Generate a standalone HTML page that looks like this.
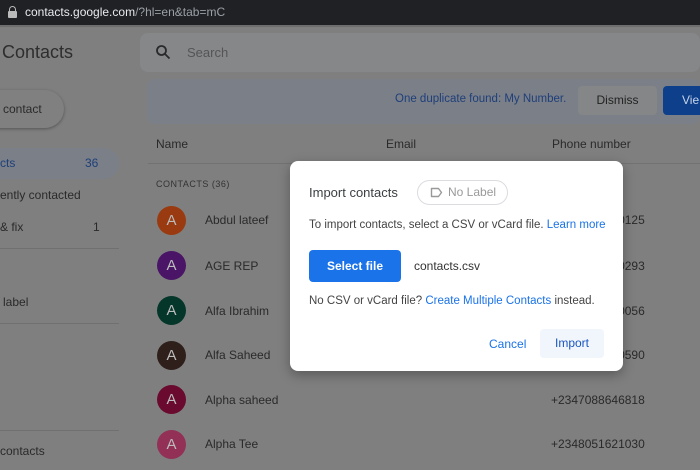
<!DOCTYPE html>
<html><head><style>
*{margin:0;padding:0;box-sizing:border-box}
html,body{width:700px;height:470px;overflow:hidden;background:#7f7f7f}
body{font-family:"Liberation Sans",Arial,sans-serif;position:relative;color:#222}
.a{position:absolute;white-space:nowrap}
.av{position:absolute;left:157px;width:29px;height:29px;border-radius:50%;color:#bbb;font-size:15px;text-align:center;line-height:29px}
.nm{position:absolute;left:205px;font-size:12px;color:#2a2a2a}
.ph{position:absolute;left:551px;font-size:12px;color:#2a2a2a}
.d{font-size:11.5px}
</style></head><body>
<div class="a" style="left:0;top:0;width:700px;height:470px;background:#7f7f7f"></div>
<div class="a" style="left:0;top:0;width:700px;height:25px;background:#202124"></div>
<div class="a" style="left:9px;top:6px;width:7px;height:6px;border:1.5px solid #bbb;border-bottom:none;border-radius:4px 4px 0 0"></div>
<div class="a" style="left:8px;top:11px;width:9px;height:7px;background:#bbb;border-radius:1px"></div>
<div class="a" style="left:25px;top:5px;font-size:12px;color:#e8eaed">contacts.google.com<span style="color:#9aa0a6">/?hl=en&amp;tab=mC</span></div>
<div class="a" style="left:0;top:25px;width:700px;height:2px;background:#6e6e6e"></div>
<div class="a" style="left:2px;top:42px;font-size:18px;color:#2e2e2e">Contacts</div>
<div class="a" style="left:140px;top:33px;width:560px;height:39px;background:#858789;border-radius:8px"></div>
<svg class="a" style="left:155px;top:44px" width="16" height="16" viewBox="0 0 16 16"><circle cx="6.5" cy="6.5" r="4.5" fill="none" stroke="#2a2a2a" stroke-width="1.8"/><path d="M10 10l4.5 4.5" stroke="#2a2a2a" stroke-width="1.8"/></svg>
<div class="a" style="left:187px;top:45px;font-size:13px;color:#555">Search</div>
<div class="a" style="left:-30px;top:90px;width:94px;height:38px;border-radius:19px;background:#808080;box-shadow:0 1px 3px rgba(0,0,0,.35)"></div>
<div class="a" style="left:3px;top:102px;font-size:12px;color:#2a2a2a">contact</div>
<div class="a" style="left:147px;top:79px;width:553px;height:45px;background:#7a7f88;border-radius:8px"></div>
<div class="a" style="left:395px;top:93px;font-size:11.5px;color:#1f3f7a">One duplicate found: My Number.</div>
<div class="a" style="left:578px;top:86px;width:79px;height:29px;background:#858687;border-radius:4px;font-size:12px;color:#222;text-align:center;line-height:29px">Dismiss</div>
<div class="a" style="left:663px;top:86px;width:50px;height:29px;background:#0d3f8a;border-radius:4px;font-size:12px;color:#c8d4ea;padding-left:19px;line-height:29px">Vie</div>
<div class="a" style="left:0;top:148px;width:119px;height:31px;background:#7a7f88;border-radius:0 16px 16px 0"></div>
<div class="a" style="left:0;top:156px;font-size:12px;color:#1f3f7a">cts</div>
<div class="a" style="left:85px;top:156px;font-size:12px;color:#1f3f7a">36</div>
<div class="a" style="left:0;top:188px;font-size:12px;color:#2a2a2a">ently contacted</div>
<div class="a" style="left:0;top:220px;font-size:12px;color:#2a2a2a">&amp; fix</div>
<div class="a" style="left:93px;top:220px;font-size:12px;color:#2a2a2a">1</div>
<div class="a" style="left:0;top:248px;width:119px;height:1px;background:#707070"></div>
<div class="a" style="left:3px;top:295px;font-size:12px;color:#2a2a2a">label</div>
<div class="a" style="left:0;top:323px;width:119px;height:1px;background:#707070"></div>
<div class="a" style="left:0;top:430px;width:119px;height:1px;background:#707070"></div>
<div class="a" style="left:0;top:444px;font-size:12px;color:#2a2a2a">contacts</div>
<div class="a" style="left:156px;top:137px;font-size:12px;color:#2a2a2a">Name</div>
<div class="a" style="left:386px;top:137px;font-size:12px;color:#2a2a2a">Email</div>
<div class="a" style="left:552px;top:137px;font-size:12px;color:#2a2a2a">Phone number</div>
<div class="a" style="left:148px;top:163px;width:552px;height:1px;background:#727272"></div>
<div class="a" style="left:156px;top:179px;font-size:9px;letter-spacing:.5px;color:#333">CONTACTS (36)</div>
<div class="av" style="top:206px;background:#9a3a10">A</div><div class="nm" style="top:213px">Abdul lateef</div><div class="ph" style="top:213px">+2348000000125</div>
<div class="av" style="top:251px;background:#4a1567">A</div><div class="nm" style="top:259px">AGE REP</div><div class="ph" style="top:259px">+2348000000293</div>
<div class="av" style="top:296px;background:#05362a">A</div><div class="nm" style="top:304px">Alfa Ibrahim</div><div class="ph" style="top:304px">+2348000000056</div>
<div class="av" style="top:341px;background:#2e1f1b">A</div><div class="nm" style="top:348px">Alfa Saheed</div><div class="ph" style="top:348px">+2348000000590</div>
<div class="av" style="top:385px;background:#6a0a2e">A</div><div class="nm" style="top:393px">Alpha saheed</div><div class="ph" style="top:393px">+2347088646818</div>
<div class="av" style="top:430px;background:#923056">A</div><div class="nm" style="top:437px">Alpha Tee</div><div class="ph" style="top:437px">+2348051621030</div>
<!-- dialog -->
<div class="a" style="left:290px;top:161px;width:333px;height:210px;background:#fff;border-radius:8px;box-shadow:0 4px 12px rgba(0,0,0,.3)"></div>
<div class="a" style="left:309px;top:185px;font-size:13px;color:#3c4043">Import contacts</div>
<div class="a" style="left:417px;top:180px;width:91px;height:25px;border:1px solid #dadce0;border-radius:13px"></div>
<svg class="a" style="left:430px;top:187px" width="13" height="11" viewBox="0 0 13 11"><path d="M1.5 1.5h7l3 4-3 4h-7z" fill="none" stroke="#999" stroke-width="1.4" stroke-linejoin="round"/></svg>
<div class="a" style="left:448px;top:185px;font-size:12px;color:#9a9a9a">No Label</div>
<div class="a d" style="left:309px;top:219px;color:#444">To import contacts, select a CSV or vCard file. <span style="color:#1a73e8">Learn more</span></div>
<div class="a" style="left:309px;top:250px;width:92px;height:32px;background:#1a73e8;border-radius:4px;color:#fff;font-size:12px;font-weight:bold;text-align:center;line-height:32px">Select file</div>
<div class="a" style="left:414px;top:259px;font-size:12px;color:#333">contacts.csv</div>
<div class="a d" style="left:309px;top:295px;color:#444">No CSV or vCard file? <span style="color:#1a73e8">Create Multiple Contacts</span> instead.</div>
<div class="a" style="left:489px;top:337px;font-size:12px;color:#1a73e8">Cancel</div>
<div class="a" style="left:540px;top:329px;width:64px;height:29px;background:#f1f5fc;border-radius:4px;font-size:12px;color:#1a56c0;text-align:center;line-height:29px">Import</div>
</body></html>
